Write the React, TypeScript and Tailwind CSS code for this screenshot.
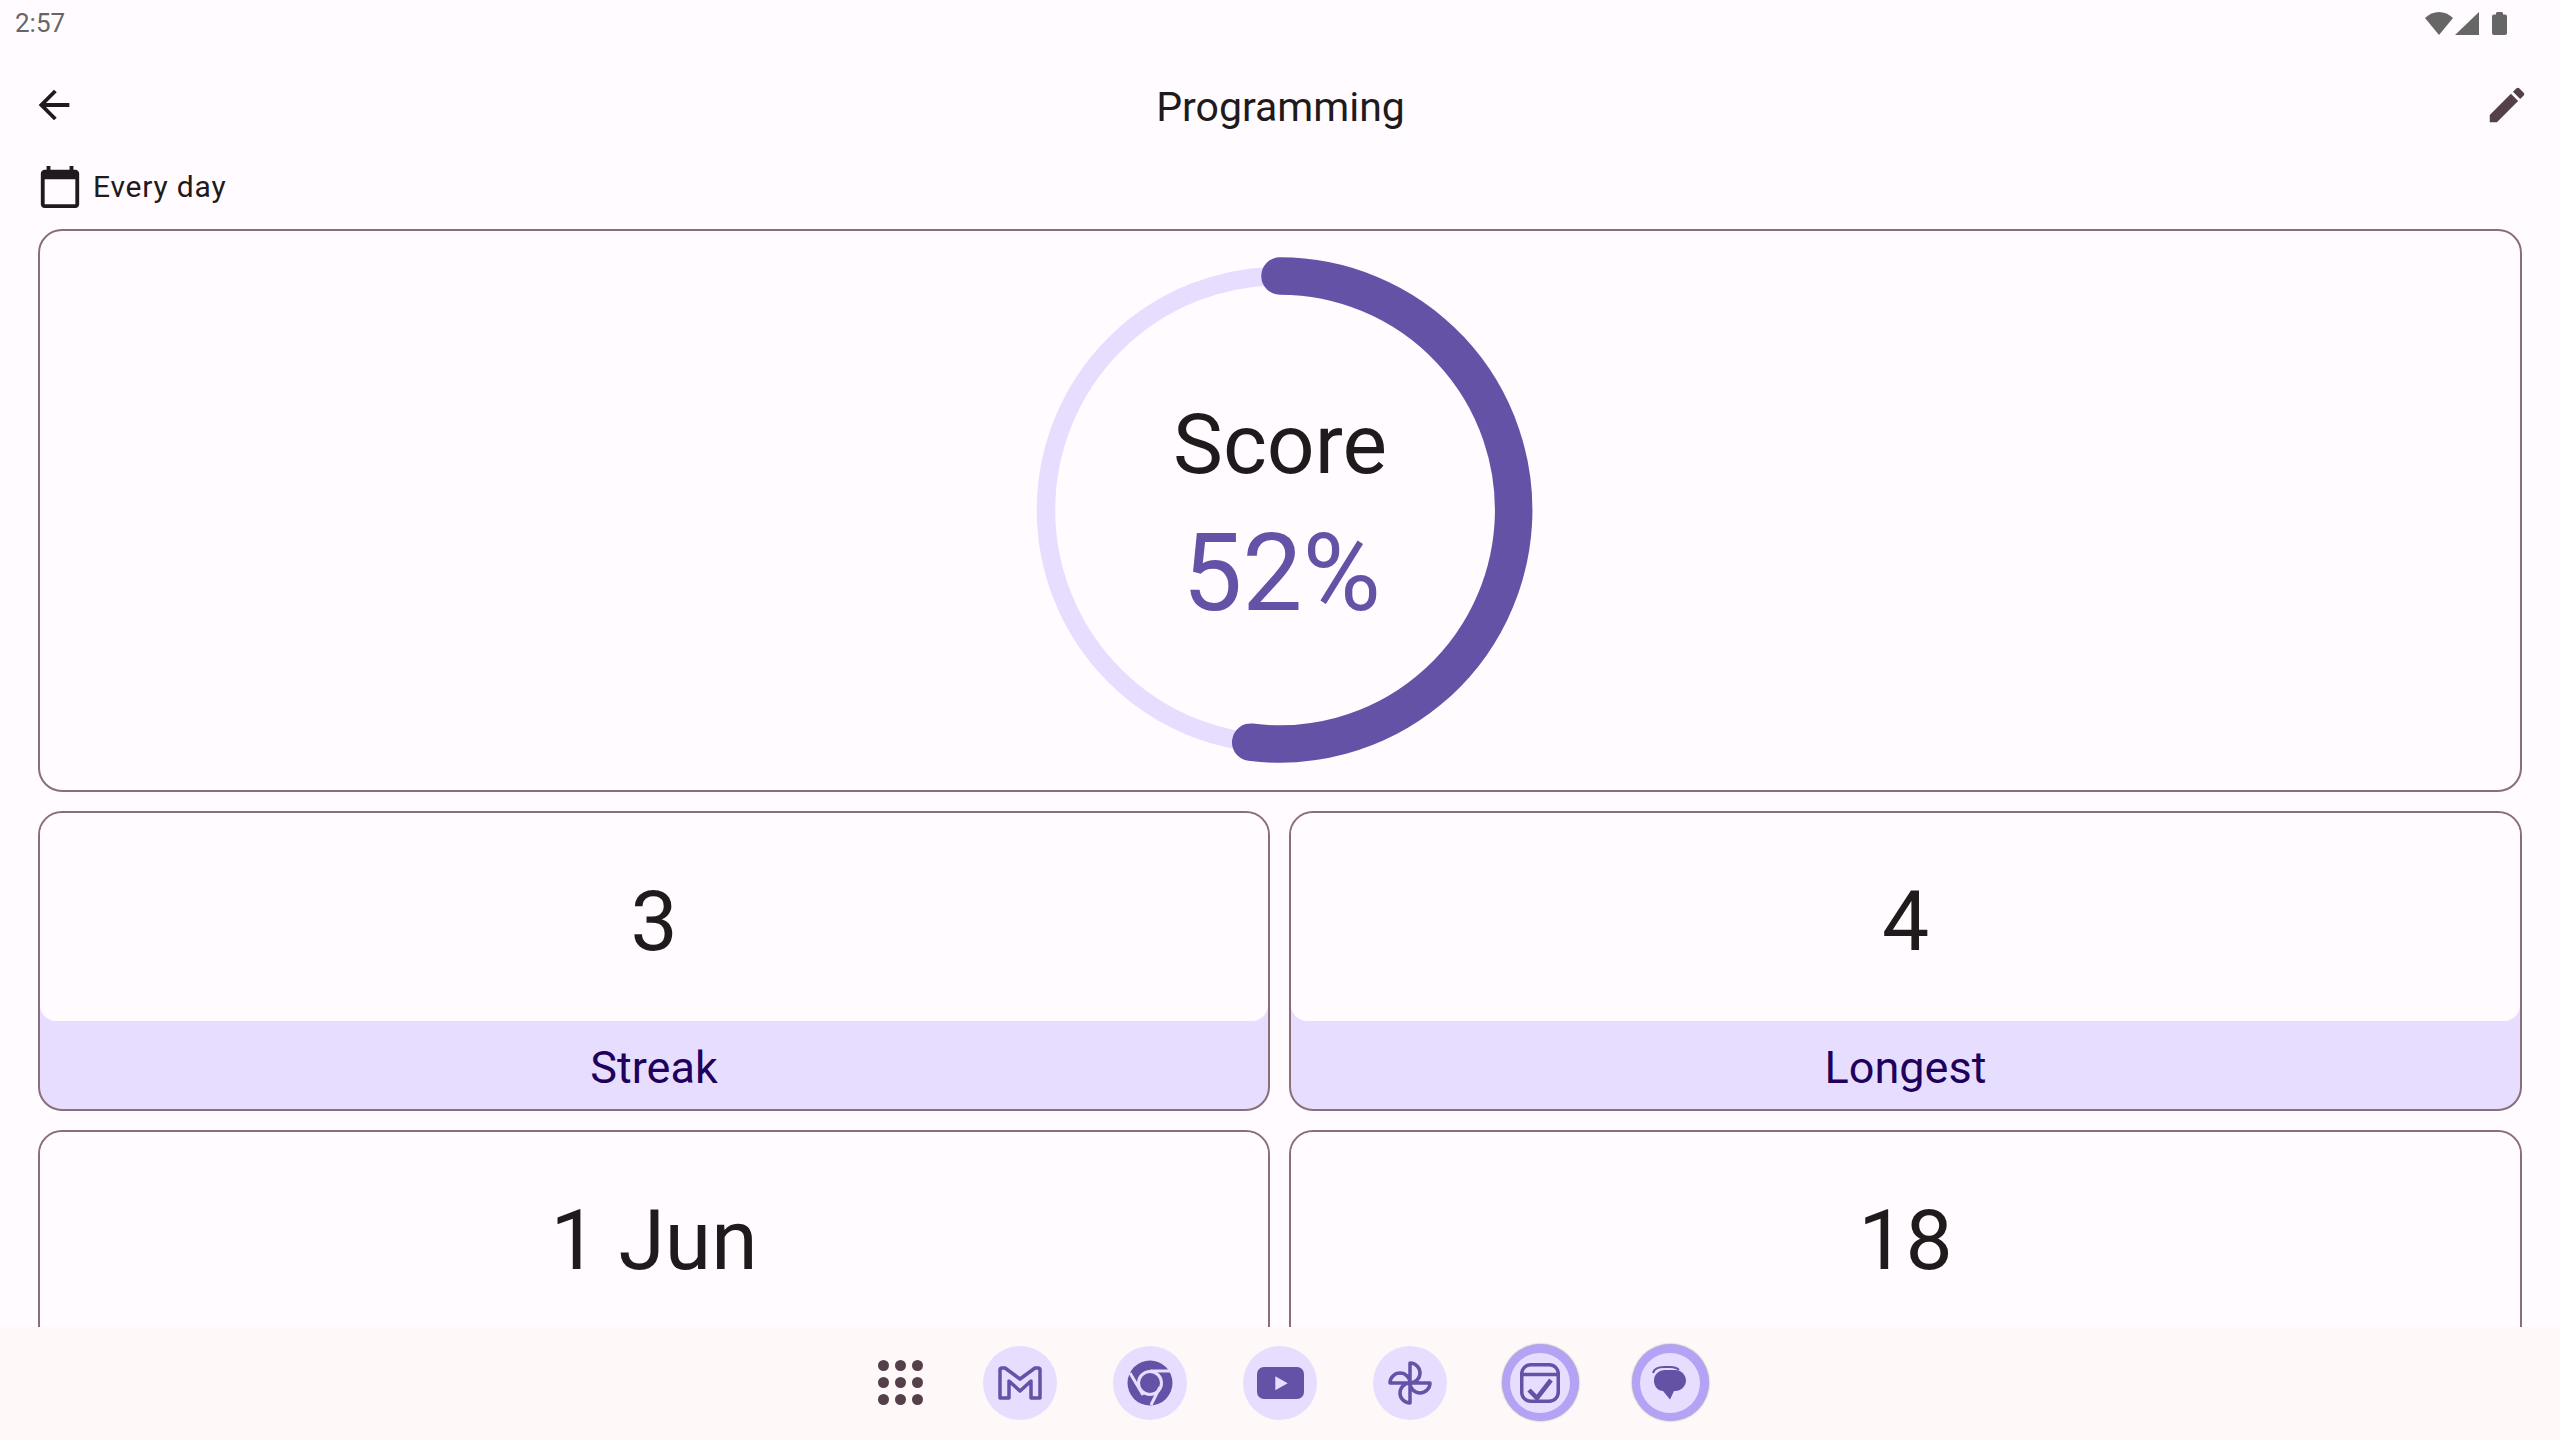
const ink = '#201A1C';
const tint = '#E7DEFF';

const Status = () => (
  <div className="flex h-[46px] items-center justify-between pl-[15px] pr-[53px] text-[#666]">
    <span className="text-[26px] leading-none">2:57</span>
    <div className="flex items-center">
      <svg width="28" height="23" viewBox="0 0 28 23" fill="#666"><path d="M14 23 0 6C8 -2 20 -2 28 6z" /></svg>
      <svg width="24" height="23" viewBox="0 0 24 23" fill="#666" className="ml-[2px]"><path d="M24 0v23H0z" /></svg>
      <svg width="15" height="23" viewBox="0 0 15 23" fill="#666" className="ml-[13px]"><path d="M4 2.500V1.500C4 .7 4.700 0 5.500 0h4c.8 0 1.500.7 1.500 1.500v1h2c1.100 0 2 .9 2 2V21c0 1.100-.9 2-2 2H2c-1.100 0-2-.9-2-2V4.500c0-1.100.9-2 2-2z" /></svg>
    </div>
  </div>
);

const Stat = ({ value, label }: { value: string; label?: string }) => (
  <div className="h-[300px] overflow-hidden rounded-[24px] border-2 border-[#8A6F7A] bg-[#E7DEFF]">
    <div className="flex h-[208px] items-center justify-center rounded-b-[16px] bg-[#FFFBFF] pt-[10px] text-[84px]" style={{ color: ink }}>{value}</div>
    <div className="flex h-[88px] items-center justify-center pt-[6px] text-[45px] text-[#21005D]">{label}</div>
  </div>
);

const DockCircle = ({ active, children }: { active?: boolean; children: React.ReactNode }) => (
  <div className="flex w-[130px] justify-center">
    <div className={active ? 'flex size-[77px] items-center justify-center rounded-full bg-[#B4A3F5] shadow-[0_0_2px_rgba(0,0,0,0.4)]' : 'flex size-[77px] items-center justify-center'}>
      <div className={active ? 'flex size-[60px] items-center justify-center rounded-full bg-[#E7DEFF]' : 'flex size-[74px] items-center justify-center rounded-full bg-[#E7DEFF]'}>
        {children}
      </div>
    </div>
  </div>
);

export default function App() {
  return (
    <div className="flex h-[1440px] w-[2560px] flex-col overflow-hidden bg-[#FFFBFF]" style={{ fontFamily: 'Roboto, sans-serif' }}>
      <Status />
      <div className="flex h-[118px] items-center justify-between pl-[31px] pr-[30px]">
        <svg width="46" height="46" viewBox="0 0 24 24" fill={ink}><path d="M20 11H7.830l5.590-5.590L12 4l-8 8 8 8 1.410-1.410L7.830 13H20v-2z" /></svg>
        <span className="pt-[4px] text-[41px] leading-none" style={{ color: ink }}>Programming</span>
        <svg width="46" height="46" viewBox="0 0 24 24" fill="#54404A"><path d="M3 17.250V21h3.750L17.810 9.940l-3.750-3.750L3 17.250zM20.710 7.040c.39-.39.39-1.020 0-1.410l-2.340-2.340c-.39-.39-1.020-.39-1.410 0l-1.830 1.830 3.750 3.750 1.830-1.830z" /></svg>
      </div>
      <div className="flex h-[46px] items-center gap-[10px] pl-[37px]">
        <svg width="46" height="46" viewBox="0 0 24 24" fill={ink}><path d="M20 3h-1V1h-2v2H7V1H5v2H4c-1.100 0-2 .9-2 2v16c0 1.100.9 2 2 2h16c1.100 0 2-.9 2-2V5c0-1.100-.9-2-2-2zm0 18H4V8h16v13z" /></svg>
        <span className="text-[30px] leading-none tracking-[0.8px]" style={{ color: ink }}>Every day</span>
      </div>
      <div className="flex min-h-0 flex-1 flex-col gap-[19px] overflow-hidden px-[38px] pt-[19px]">
        <div className="relative flex h-[563px] shrink-0 flex-col items-center rounded-[24px] border-2 border-[#8A6F7A] pt-[166px]">
          <svg width="500" height="500" viewBox="0 0 500 500" fill="none" className="absolute left-1/2 top-[29px] -translate-x-1/2 overflow-visible">
            <circle cx="250" cy="250" r="234" stroke={tint} strokeWidth="18.500" />
            <path d="M250 16A234 234 0 1 1 220.700 482.200" stroke="#6352A5" strokeWidth="37.500" strokeLinecap="round" />
          </svg>
          <span className="relative text-[84px] leading-[96px]" style={{ color: ink }}>Score</span>
          <span className="relative mt-[25px] pl-[3px] text-[107px] leading-[112px] text-[#6352A5]">52%</span>
        </div>
        <div className="grid shrink-0 grid-cols-[1232px_1fr] gap-[19px]">
          <Stat value="3" label="Streak" />
          <Stat value="4" label="Longest" />
          <Stat value="1 Jun" />
          <Stat value="18" />
        </div>
      </div>
      <div className="flex h-[113px] shrink-0 items-center justify-center bg-[#FEF9F8] pb-[2px]">
        <div className="flex w-[130px] justify-center pl-[21px]">
          <div className="grid grid-cols-3 gap-[6px]">
            {Array.from({ length: 9 }).map((_, i) => (
              <div key={i} className="size-[11px] rounded-full bg-[#54404A]" />
            ))}
          </div>
        </div>
        <DockCircle>
          <svg width="44" height="34" viewBox="0 0 44 34" fill="none" stroke="#6352A5" strokeWidth="3.500" strokeLinejoin="round"><path d="M4 2h3l15 11L37 2h3a2 2 0 0 1 2 2v28h-9V15L22 25 11 15v17H2V4a2 2 0 0 1 2-2z" /></svg>
        </DockCircle>
        <DockCircle>
          <svg width="46" height="46" viewBox="0 0 46 46" fill="none"><circle cx="23" cy="23" r="22.500" fill="#6352A5" /><circle cx="23" cy="23" r="11.500" stroke={tint} strokeWidth="3" /><path d="M3 13l13 22M23 11h22M33 27l-9 18" stroke={tint} strokeWidth="3" /></svg>
        </DockCircle>
        <DockCircle>
          <svg width="47" height="32" viewBox="0 0 47 32"><rect width="47" height="32" rx="7" fill="#6352A5" /><path d="M18.300 9.300v14l12.400-7z" fill={tint} /></svg>
        </DockCircle>
        <DockCircle>
          <svg width="44" height="44" viewBox="0 0 44 44" fill="none" stroke="#6352A5" strokeWidth="3.500" strokeLinejoin="round"><path d="M22 22V2a10 10 0 0 1 0 20zM22 22h20a10 10 0 0 1-20 0zM22 22v20a10 10 0 0 1 0-20zM22 22H2a10 10 0 0 1 20 0z" /></svg>
        </DockCircle>
        <DockCircle active>
          <svg width="40" height="40" viewBox="0 0 40 40" fill="none" stroke="#6352A5" strokeWidth="3.500"><rect x="1.750" y="1.750" width="36.500" height="36.500" rx="9" /><path d="M2 11.500h36" /><path d="M9 27l8 8 14-18" strokeWidth="4.500" /></svg>
        </DockCircle>
        <DockCircle active>
          <svg width="36" height="34" viewBox="0 0 36 34"><path d="M1 7c1-4 5-6 11-6h6c4 0 7 1 9 3" fill="none" stroke="#6352A5" strokeWidth="2" /><path d="M13 4h10c6 0 11 4.700 11 10.500S29 25 23 25h-1l-4 8.500L11 25C6 25 2 20.500 2 14.500S7 4 13 4z" fill="#6352A5" /></svg>
        </DockCircle>
      </div>
    </div>
  );
}
